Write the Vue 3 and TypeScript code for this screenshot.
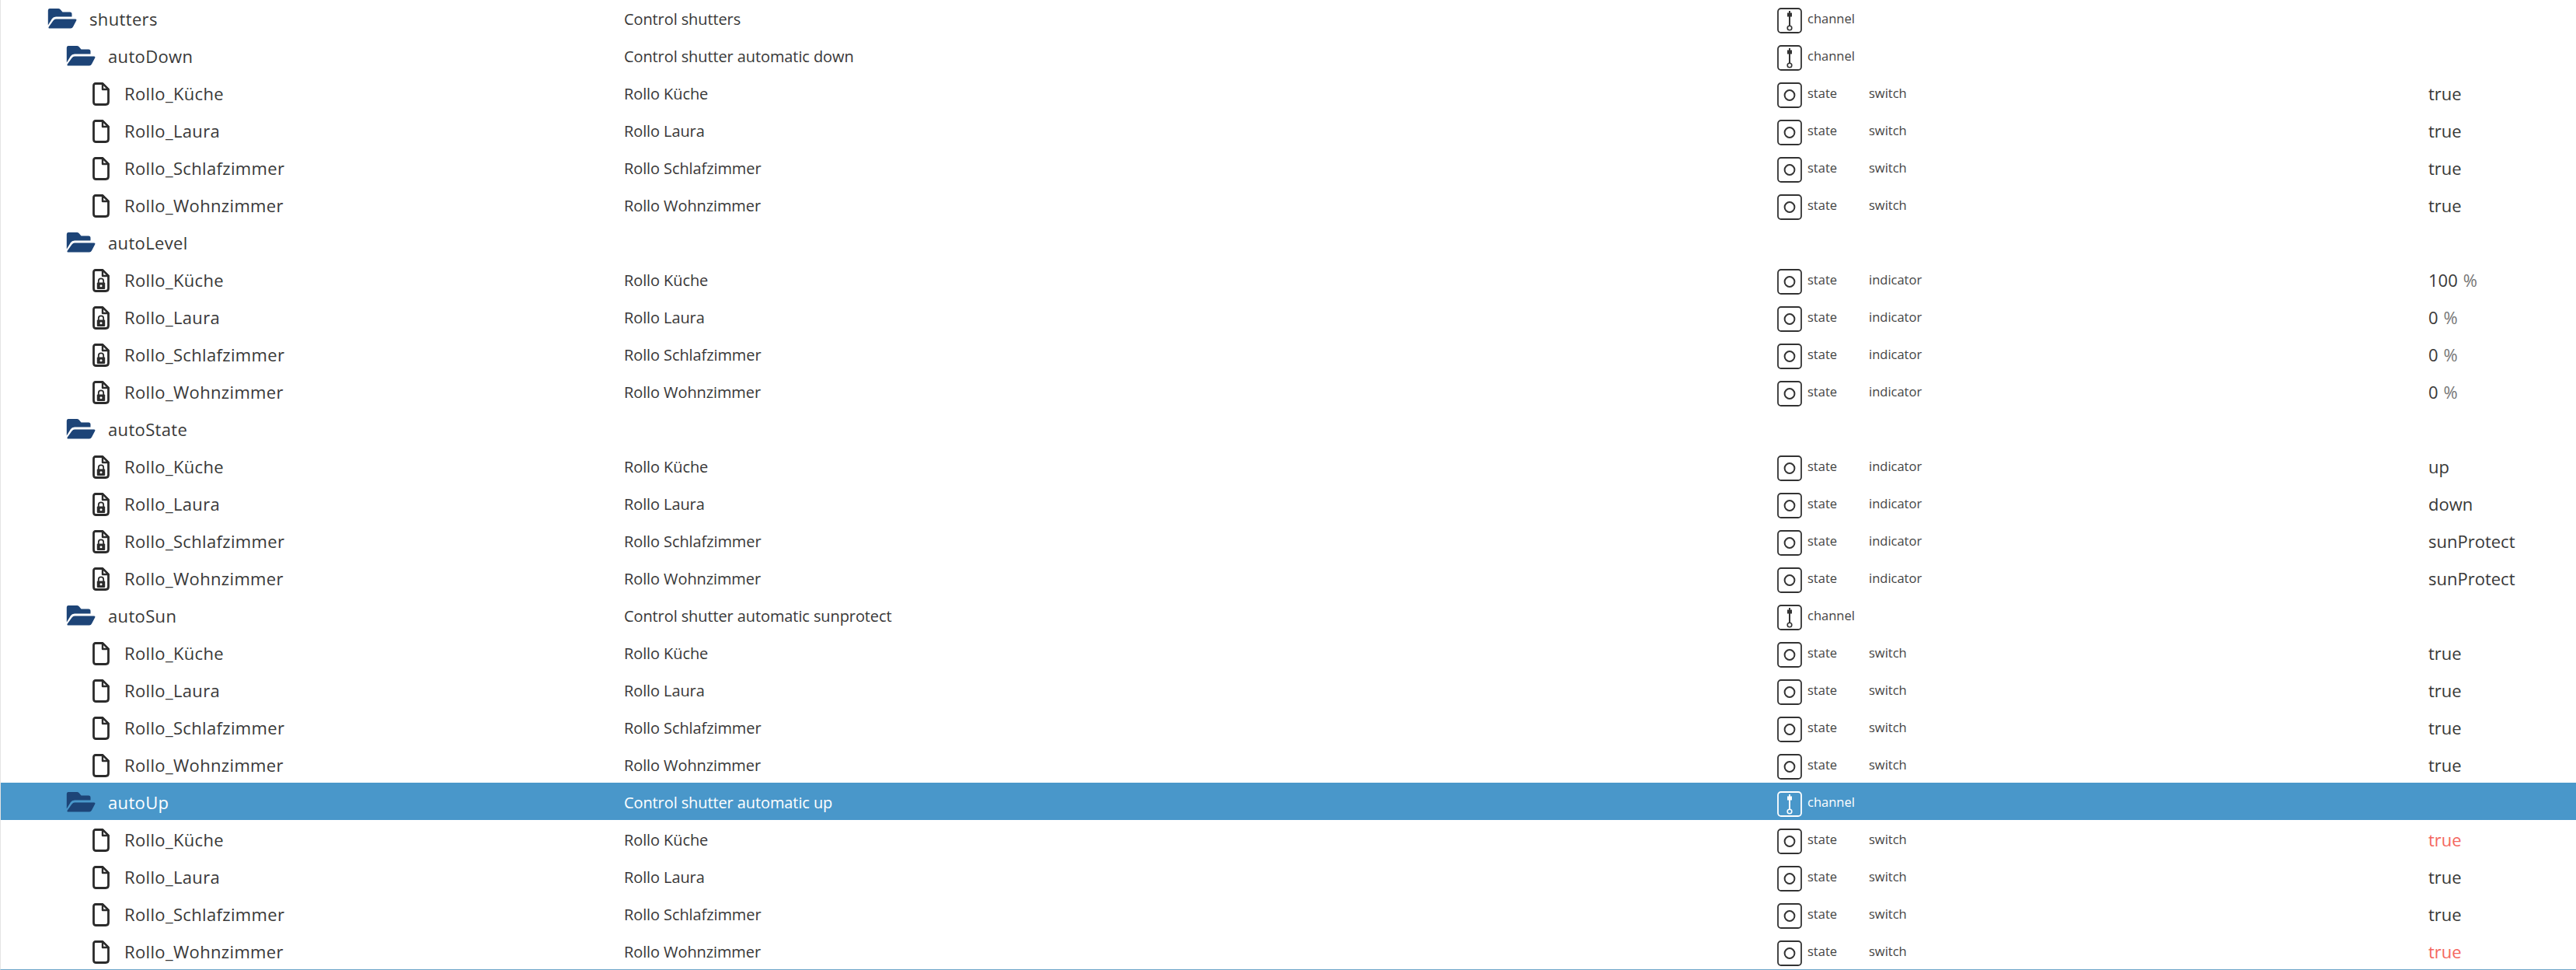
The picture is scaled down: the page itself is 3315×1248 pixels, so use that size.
<script setup lang="ts">
interface Row {
  name: string
  level: number
  kind: 'folder' | 'file' | 'locked'
  desc?: string
  type?: 'channel' | 'state'
  role?: string
  value?: string
  unit?: string
  alert?: boolean
  selected?: boolean
}

const rooms = [
  ['Rollo_Küche', 'Rollo Küche'],
  ['Rollo_Laura', 'Rollo Laura'],
  ['Rollo_Schlafzimmer', 'Rollo Schlafzimmer'],
  ['Rollo_Wohnzimmer', 'Rollo Wohnzimmer'],
]

function children(
  kind: 'file' | 'locked',
  role: string,
  values: string[],
  unit?: string,
  alerts: boolean[] = [],
): Row[] {
  return rooms.map(([name, desc], i) => ({
    name, desc, level: 2, kind, type: 'state' as const, role, value: values[i], unit, alert: alerts[i],
  }))
}

const rows: Row[] = [
  { name: 'shutters', level: 0, kind: 'folder', desc: 'Control shutters', type: 'channel' },
  { name: 'autoDown', level: 1, kind: 'folder', desc: 'Control shutter automatic down', type: 'channel' },
  ...children('file', 'switch', ['true', 'true', 'true', 'true']),
  { name: 'autoLevel', level: 1, kind: 'folder' },
  ...children('locked', 'indicator', ['100', '0', '0', '0'], '%'),
  { name: 'autoState', level: 1, kind: 'folder' },
  ...children('locked', 'indicator', ['up', 'down', 'sunProtect', 'sunProtect']),
  { name: 'autoSun', level: 1, kind: 'folder', desc: 'Control shutter automatic sunprotect', type: 'channel' },
  ...children('file', 'switch', ['true', 'true', 'true', 'true']),
  { name: 'autoUp', level: 1, kind: 'folder', desc: 'Control shutter automatic up', type: 'channel', selected: true },
  ...children('file', 'switch', ['true', 'true', 'true', 'true'], undefined, [true, false, false, true]),
]

function indent(r: Row): string {
  if (r.kind === 'folder') return `${60 + r.level * 24}px`
  return '117px'
}
</script>

<template>
  <div class="tree">
    <div class="list">
      <div v-for="(r, i) in rows" :key="i" class="row" :class="{ selected: r.selected }">
        <div class="name" :style="{ paddingLeft: indent(r) }">
          <svg v-if="r.kind === 'folder'" class="folder" width="38" height="26" viewBox="0 0 38 26">
            <path d="M3 0H14Q15.500 0 16.500 1L19.500 4.500H29Q31.500 4.500 31.500 7V10.500H11Q7.500 10.500 6 13L0.800 21.500V3Q0.800 0 3 0Z" fill="#1d4477" />
            <path d="M11 13.500H36Q38 13.500 37.200 15.500L33 23.500Q32 25.500 30 25.500H3Q0.600 25.500 1.800 23.500L7.500 15.500Q9 13.500 11 13.500Z" fill="#1d4477" />
          </svg>
          <svg v-else class="file" width="24" height="31" viewBox="0 0 24 31">
            <path d="M5 2.500H14L21.500 10V26Q21.500 29.500 18 29.500H5Q2.500 29.500 2.500 26V5Q2.500 2.500 5 2.500Z" fill="#fff" stroke="#2b2b2b" stroke-width="2.800" stroke-linejoin="round" />
            <path d="M14 2.500V10H21.500Z" fill="#fff" stroke="#2b2b2b" stroke-width="2.400" stroke-linejoin="round" />
            <g v-if="r.kind === 'locked'">
              <path d="M8.800 19V16.500A3.200 3.200 0 0 1 15.200 16.500V19" fill="none" stroke="#2b2b2b" stroke-width="1.800" />
              <rect x="6.800" y="18.500" width="10.400" height="8.500" rx="1" fill="#2b2b2b" />
              <circle cx="12" cy="22.700" r="1.500" fill="#fff" />
            </g>
          </svg>
          <span class="label">{{ r.name }}</span>
        </div>
        <div class="desc">{{ r.desc }}</div>
        <div class="type">
          <svg v-if="r.type" class="type-icon" width="32" height="33" viewBox="0 0 32 33">
            <rect x="1" y="1" width="30" height="31" rx="4" fill="none" stroke="currentColor" stroke-width="1.800" />
            <template v-if="r.type === 'channel'">
              <path d="M16 4V24" fill="none" stroke="currentColor" stroke-width="2" />
              <rect x="13" y="6.500" width="6" height="5" fill="currentColor" />
              <circle cx="16" cy="26" r="2.800" fill="none" stroke="currentColor" stroke-width="1.600" />
            </template>
            <circle v-else cx="16" cy="16.500" r="6.400" fill="none" stroke="currentColor" stroke-width="2" />
          </svg>
          <span v-if="r.type" class="type-label">{{ r.type }}</span>
        </div>
        <div class="role">{{ r.role }}</div>
        <div class="value" :class="{ alert: r.alert }">
          {{ r.value }}<span v-if="r.unit" class="unit">{{ r.unit }}</span>
        </div>
      </div>
    </div>
  </div>
</template>

<style scoped>
.tree {
  width: 3315px;
  height: 1248px;
  box-sizing: border-box;
  overflow: hidden;
  border-left: 1px solid #e4e4e4;
  border-bottom: 1px solid #6ea6c9;
  font-family: "Open Sans", "Noto Sans", sans-serif;
  color: #383838;
  background: #fff;
}
.list {
  margin-top: -1px;
}
.row {
  display: grid;
  grid-template-columns: 802px 1484px 118px 720px 1fr;
  align-items: center;
  height: 48px;
}
.row.selected {
  background: #4997ca;
  color: #fff;
}
.name {
  display: flex;
  align-items: center;
  min-width: 0;
}
.folder {
  flex: none;
  margin-right: 16px;
}
.file {
  flex: none;
  margin-right: 18px;
  margin-top: 1px;
}
.label {
  font-size: 22px;
  letter-spacing: 0.35px;
  line-height: 48px;
  margin-top: 1px;
  white-space: nowrap;
}
.desc {
  font-size: 20px;
  letter-spacing: -0.1px;
  margin-top: 1px;
  white-space: nowrap;
}
.type {
  display: flex;
  align-items: center;
  height: 48px;
  font-size: 16.500px;
  color: #444;
}
.selected .type {
  color: #fff;
}
.type-icon {
  flex: none;
  margin-top: 6px;
  color: #333;
}
.selected .type-icon {
  color: #fff;
}
.type-label {
  margin-left: 7px;
}
.role {
  font-size: 16.500px;
  color: #444;
}
.value {
  font-size: 22px;
  margin-top: 1px;
  white-space: nowrap;
}
.value.alert {
  color: #f4675f;
}
.unit {
  margin-left: 7px;
  color: #777;
}
</style>
